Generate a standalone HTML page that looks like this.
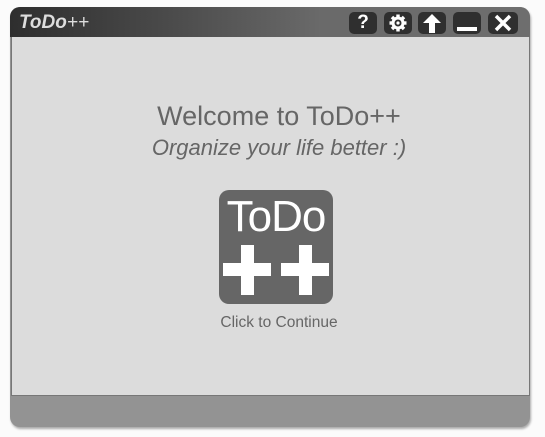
<!DOCTYPE html><html><head><style>
body{margin:0;width:545px;height:437px;background:#fbfbfb;position:relative;overflow:hidden;font-family:"Liberation Sans",sans-serif}
.win{position:absolute;left:10px;top:7px;width:520px;height:420px;border-radius:10px;background:#939393;box-shadow:1px 2px 2px #aaa;overflow:hidden}
.tb{position:absolute;left:0;top:0;width:520px;height:30px;background:linear-gradient(90deg,#2e2e2e 0%,#4a4a4a 30%,#6a6a6a 60%,#6e6e6e 100%)}
.title{position:absolute;left:9px;top:5px;color:#ddd;font-size:19px;font-style:italic;font-weight:bold}
.title span{font-weight:normal}
.b{position:absolute;top:5px;width:28px;height:22px;background:#2f2f2f;border-radius:5px;color:#fff;text-align:center;font-weight:bold;font-size:19px;line-height:22px}
.c{position:absolute;left:1px;top:30px;width:517px;height:358px;background:#dcdcdc;border:1px solid #777;border-top:none}
.t{position:absolute;left:0;width:558px;text-align:center;color:#666}
</style></head><body>
<div class="win">
<div class="tb">
<div class="title">ToDo<span>++</span></div>
<div class="b" style="left:339px">?</div>
<div class="b" style="left:374px"><svg width="20" height="20" viewBox="0 0 20 20" style="margin-top:1px"><g fill="#fff"><circle cx="10" cy="10" r="6.5"/><rect x="8.3" y="1.5" width="3.4" height="17"/><rect x="1.5" y="8.3" width="17" height="3.4"/><rect x="8.3" y="1.5" width="3.4" height="17" transform="rotate(45 10 10)"/><rect x="8.3" y="1.5" width="3.4" height="17" transform="rotate(-45 10 10)"/></g><circle cx="10" cy="10" r="3.5" fill="#2f2f2f"/><circle cx="10" cy="10" r="1.6" fill="#fff"/></svg></div>
<div class="b" style="left:408px"><svg width="20" height="22" viewBox="0 0 20 22"><path d="M10 2 L19 11 L13 11 L13 21 L7 21 L7 11 L1 11 Z" fill="#fff"/></svg></div>
<div class="b" style="left:443px"><div style="position:absolute;left:4px;top:15px;width:20px;height:4px;background:#fff"></div></div>
<div class="b" style="left:478px;width:30px"><svg width="18" height="18" viewBox="0 0 18 18" style="margin-top:2px"><path d="M2 2 L16 16 M16 2 L2 16" stroke="#fff" stroke-width="3.5"/></svg></div>
</div>
<div class="c"></div>
</div>
<div class="t" style="top:101px;font-size:27px">Welcome to ToDo++</div>
<div class="t" style="top:135px;font-size:22px;font-style:italic">Organize your life better :)</div>
<div style="position:absolute;left:219px;top:190px;width:114px;height:114px;background:#666;border-radius:10px">
<div style="position:absolute;left:0;top:2px;width:114px;text-align:center;color:#fff;font-size:44px;font-weight:300;letter-spacing:-1px">ToDo</div>
<svg style="position:absolute;left:4px;top:55px" width="106" height="50" viewBox="0 0 106 50"><g fill="#fff"><rect x="0" y="18" width="48" height="13"/><rect x="18" y="0" width="13" height="50"/><rect x="58" y="18" width="48" height="13"/><rect x="76" y="0" width="13" height="50"/></g></svg>
</div>
<div class="t" style="top:314px;font-size:15.5px">Click to Continue</div>
</body></html>
